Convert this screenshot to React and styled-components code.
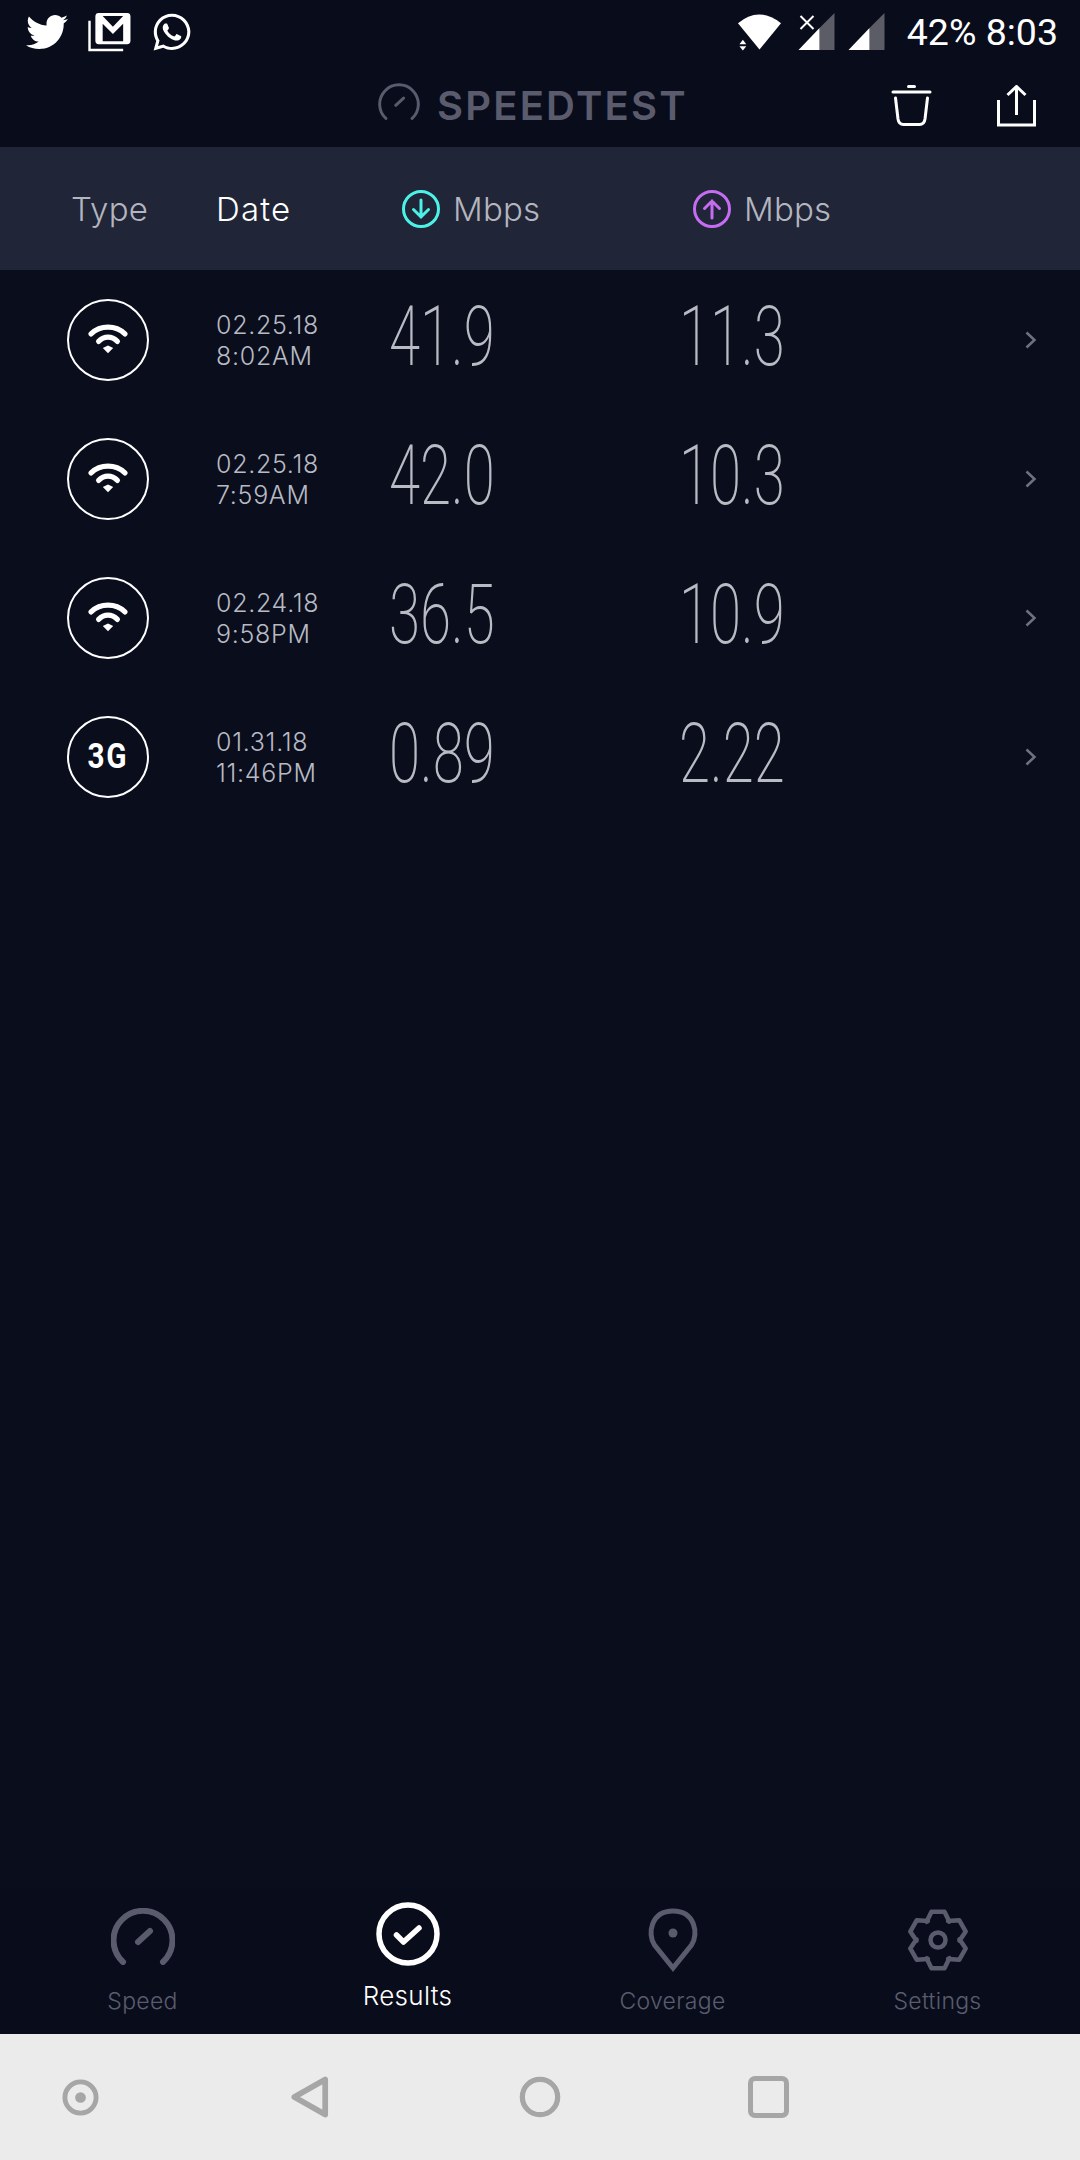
import styled, { createGlobalStyle } from "styled-components";
import { FaTwitter, FaWhatsapp } from "react-icons/fa";

const results = [
	{ type: "wifi", date: "02.25.18", time: "8:02AM", down: "41.9", up: "11.3" },
	{ type: "wifi", date: "02.25.18", time: "7:59AM", down: "42.0", up: "10.3" },
	{ type: "wifi", date: "02.24.18", time: "9:58PM", down: "36.5", up: "10.9" },
	{ type: "3G", date: "01.31.18", time: "11:46PM", down: "0.89", up: "2.22" },
];

// six toothed outline, one tooth straight up
const gearPath = () => {
	const pts = [];
	for (let i = 0; i < 6; i++) {
		const a = -90 + i * 60;
		[[-32, 21.5], [-13, 29], [13, 29], [32, 21.5]].forEach(([d, r]) => {
			const t = ((a + d) * Math.PI) / 180;
			pts.push(`${(32 + r * Math.cos(t)).toFixed(2)} ${(32 + r * Math.sin(t)).toFixed(2)}`);
		});
	}
	return `M${pts.join("L")}Z`;
};

const GaugeIcon = ({ size, color, width }) => (
	<svg width={size} height={size * 0.89} viewBox="0 0 64 57" fill="none" stroke={color} strokeWidth={width} strokeLinecap="round">
		<path d="M12 54A29.5 29.5 0 1 1 52 54" />
		<path d="M27 34L39 23" />
	</svg>
);

const WifiGlyph = () => (
	<svg width="40" height="32" viewBox="0 0 42 34" fill="none" stroke="#fff" strokeWidth="5.5" strokeLinecap="round">
		<path d="M3 10.5C13 1 29 1 39 10.5" />
		<path d="M11 18.5C17 12.5 25 12.5 31 18.5" />
		<path d="M15.5 25.5L21 22.8L26.5 25.5L21 31Z" fill="#fff" stroke="none" />
	</svg>
);

const App = () => {
	return (
		<Page>
			<GlobalStyle />
			<StatusBar>
				<StatusIcons>
					<FaTwitter size="42" color="#fff" />
					<svg width="45" height="39" viewBox="0 0 44 40" fill="none" stroke="#fff" strokeWidth="3">
						<path d="M1.5 8V38H36" strokeWidth="2.5" />
						<rect x="9" y="1.5" width="33" height="29" rx="2" />
						<path d="M9 3H15L25.5 14L36 3H42V30H36V11L25.5 21.5L15 11V30H9Z" fill="#fff" stroke="none" />
					</svg>
					<FaWhatsapp size="42" color="#fff" />
				</StatusIcons>
				<StatusRight>
					<WifiMark width="45" height="38" viewBox="0 0 46 38">
						<path d="M1 10Q22 -8 45 10L23 37Z" fill="#fff" />
						<path d="M6 27L9.5 31.5H2.5ZM2.5 33.5H9.5L6 38Z" fill="#fff" />
					</WifiMark>
					<svg width="37" height="38" viewBox="0 0 36 38">
						<path d="M21 15L36 0V37H21Z" fill="#5b5c66" />
						<path d="M0 37L21 15V37Z" fill="#fff" />
						<path d="M2 3L15 16M15 3L2 16" stroke="#fff" strokeWidth="2" />
					</svg>
					<SignalMark width="37" height="38" viewBox="0 0 36 38">
						<path d="M21 15L36 0V37H21Z" fill="#5b5c66" />
						<path d="M0 37L21 15V37Z" fill="#fff" />
					</SignalMark>
					<Clock>42% 8:03</Clock>
				</StatusRight>
			</StatusBar>
			<TitleBar>
				<Brand>
					<BrandGauge>
						<GaugeIcon size={42} color="#5a5c6e" width={4.5} />
					</BrandGauge>
					<BrandName>SPEEDTEST</BrandName>
				</Brand>
				<Actions>
					<svg width="41" height="42" viewBox="0 0 40 42" fill="none" stroke="#fff" strokeWidth="3" strokeLinecap="round">
						<path d="M1.5 7H38.5" />
						<path d="M17 1.5H23" />
						<path d="M4 13L6.5 34Q7.3 39.5 12 39.5H28Q32.7 39.5 33.5 34L36 13" />
					</svg>
					<svg width="41" height="42" viewBox="0 0 40 42" fill="none" stroke="#fff" strokeWidth="3">
						<path d="M2 15V40H38V15" />
						<path d="M20 30V2M11 10L20 1.5L29 10" />
					</svg>
				</Actions>
			</TitleBar>
			<TableHead>
				<HeadLabel>Type</HeadLabel>
				<HeadLabel $active>Date</HeadLabel>
				<SpeedHead>
					<svg width="40" height="40" viewBox="0 0 40 40" fill="none" stroke="#4cf2e6" strokeWidth="3" strokeLinecap="round">
						<circle cx="20" cy="20" r="17.5" />
						<path d="M20 11V28M12.5 20.5L20 28L27.5 20.5" />
					</svg>
					<HeadLabel>Mbps</HeadLabel>
				</SpeedHead>
				<SpeedHead>
					<svg width="40" height="40" viewBox="0 0 40 40" fill="none" stroke="#c56cf0" strokeWidth="3" strokeLinecap="round">
						<circle cx="20" cy="20" r="17.5" />
						<path d="M20 29V12M12.5 19.5L20 12L27.5 19.5" />
					</svg>
					<HeadLabel>Mbps</HeadLabel>
				</SpeedHead>
			</TableHead>
			<List>
				{results.map((r) => (
					<Row key={r.date + r.time}>
						<TypeBadge>{r.type === "wifi" ? <WifiGlyph /> : <NetworkText>3G</NetworkText>}</TypeBadge>
						<DateCell>
							<span>{r.date}</span>
							<span>{r.time}</span>
						</DateCell>
						<Speed>{r.down}</Speed>
						<Speed>{r.up}</Speed>
						<Chevron width="14" height="20" viewBox="0 0 14 20" fill="none" stroke="#6f7180" strokeWidth="2.5">
							<path d="M2.5 2.5L10.5 10L2.5 17.5" />
						</Chevron>
					</Row>
				))}
			</List>
			<TabBar>
				<Tab>
					<TabIcon>
						<GaugeIcon size={64} color="#5a5c6e" width={6} />
					</TabIcon>
					<TabLabel>Speed</TabLabel>
				</Tab>
				<Tab $active>
					<TabIcon $active>
						<svg width="64" height="64" viewBox="0 0 64 64" fill="none" stroke="#fff" strokeWidth="5.5" strokeLinecap="round" strokeLinejoin="round">
							<circle cx="32" cy="32" r="29" />
							<path d="M20.5 33L27.5 40L43 26" />
						</svg>
					</TabIcon>
					<TabLabel $active>Results</TabLabel>
				</Tab>
				<Tab>
					<TabIcon>
						<svg width="50" height="64" viewBox="0 0 50 64" fill="none" stroke="#5a5c6e" strokeWidth="5">
							<path d="M25 60L6.5 37C-1 26 3 3 25 3S51 26 43.5 37Z" strokeLinejoin="miter" />
							<circle cx="25" cy="25" r="4.5" fill="#5a5c6e" stroke="none" />
						</svg>
					</TabIcon>
					<TabLabel>Coverage</TabLabel>
				</Tab>
				<Tab>
					<TabIcon>
						<svg width="64" height="64" viewBox="0 0 64 64" fill="none" stroke="#5a5c6e" strokeWidth="4.5" strokeLinejoin="round">
							<path d={gearPath()} />
							<circle cx="32" cy="32" r="7.5" />
						</svg>
					</TabIcon>
					<TabLabel>Settings</TabLabel>
				</Tab>
			</TabBar>
			<NavBar>
				<NavSlot>
					<svg width="37" height="37" viewBox="0 0 38 38" fill="none" stroke="#a6a6a6" strokeWidth="5">
						<circle cx="19" cy="19" r="16" />
						<circle cx="19" cy="19" r="5.5" fill="#a6a6a6" stroke="none" />
					</svg>
				</NavSlot>
				<NavSlot $gap={192}>
					<svg width="38" height="42" viewBox="0 0 40 44" fill="none" stroke="#a6a6a6" strokeWidth="6" strokeLinejoin="round">
						<path d="M36 3.5V40.5L3.5 22Z" />
					</svg>
				</NavSlot>
				<NavSlot $gap={190}>
					<svg width="42" height="42" viewBox="0 0 44 44" fill="none" stroke="#a6a6a6" strokeWidth="5.5">
						<circle cx="22" cy="22" r="18.5" />
					</svg>
				</NavSlot>
				<NavSlot $gap={187}>
					<NavSquare />
				</NavSlot>
			</NavBar>
		</Page>
	);
};

export default App;

const GlobalStyle = createGlobalStyle`
	* {
		box-sizing: border-box;
	}
	body {
		margin: 0;
		background: #0a0d1c;
		font-family: "Inter", "Liberation Sans", sans-serif;
	}
`;
const Page = styled.div`
	display: flex;
	flex-direction: column;
	width: 1080px;
	height: 2160px;
	overflow: hidden;
	background: #0a0d1c;
`;
const StatusBar = styled.div`
	display: flex;
	justify-content: space-between;
	align-items: center;
	height: 64px;
	padding: 0 22px 0 26px;
	background: #090c1b;
`;
const StatusIcons = styled.div`
	display: flex;
	align-items: center;
	gap: 19px;
`;
const StatusRight = styled.div`
	display: flex;
	align-items: center;
	gap: 13px;
`;
const WifiMark = styled.svg`
	margin-right: 3px;
`;
const SignalMark = styled.svg`
	margin-right: 9px;
`;
const Clock = styled.div`
	font-family: "Roboto", sans-serif;
	font-size: 37.5px;
	color: #fff;
	white-space: nowrap;
`;
const TitleBar = styled.div`
	display: flex;
	justify-content: space-between;
	align-items: center;
	height: 83px;
	padding: 0 43px 0 378px;
	background: #090c1b;
`;
const Brand = styled.div`
	display: flex;
	align-items: center;
	gap: 17px;
`;
const BrandGauge = styled.div`
	display: flex;
	margin-bottom: 8px;
`;
const BrandName = styled.div`
	font-size: 40px;
	font-weight: 600;
	line-height: 44px;
	letter-spacing: 2.2px;
	color: #5a5c6e;
`;
const Actions = styled.div`
	display: flex;
	align-items: center;
	gap: 64px;
`;
const TableHead = styled.div`
	display: grid;
	grid-template-columns: 145px 185px 291px 1fr;
	align-items: center;
	height: 123px;
	padding-left: 71px;
	background: #202538;
`;
const HeadLabel = styled.div`
	font-size: 33px;
	font-weight: 300;
	letter-spacing: ${(p) => (p.$active ? "1.2px" : "0.2px")};
	color: ${(p) => (p.$active ? "#ffffff" : "#b3b5bf")};
`;
const SpeedHead = styled.div`
	display: flex;
	align-items: center;
	gap: 12px;
`;
const List = styled.div`
	flex: 1;
`;
const Row = styled.div`
	display: grid;
	grid-template-columns: 149px 173px 290px 1fr auto;
	align-items: center;
	height: 139px;
	padding: 0 42px 0 67px;
`;
const TypeBadge = styled.div`
	display: flex;
	align-items: center;
	justify-content: center;
	width: 82px;
	height: 82px;
	border: 2px solid #fff;
	border-radius: 50%;
`;
const NetworkText = styled.span`
	display: inline-block;
	font-family: "Roboto", sans-serif;
	font-size: 35px;
	font-weight: 700;
	letter-spacing: 2px;
	color: #fff;
	transform: scaleX(0.85);
`;
const DateCell = styled.div`
	display: flex;
	flex-direction: column;
	margin-top: 2px;
	font-size: 25px;
	font-weight: 300;
	line-height: 31px;
	letter-spacing: 0.7px;
	color: #b8bac3;
`;
const Speed = styled.div`
	margin-top: -5px;
	font-family: "Roboto", sans-serif;
	font-size: 83px;
	font-weight: 200;
	line-height: 90px;
	color: #b9bbc4;
	white-space: nowrap;
	transform: scaleX(0.68);
	transform-origin: left center;
`;
const Chevron = styled.svg`
	display: block;
`;
const TabBar = styled.div`
	display: grid;
	grid-template-columns: repeat(4, 1fr);
	height: 146px;
	padding: 0 10px;
	background: #090c1b;
`;
const Tab = styled.div`
	display: flex;
	flex-direction: column;
	align-items: center;
	padding-top: ${(p) => (p.$active ? "14px" : "20px")};
`;
const TabIcon = styled.div`
	display: flex;
	justify-content: center;
	height: ${(p) => (p.$active ? "66px" : "64px")};
`;
const TabLabel = styled.div`
	margin-top: ${(p) => (p.$active ? "11px" : "12px")};
	font-size: ${(p) => (p.$active ? "26px" : "23px")};
	font-weight: 300;
	line-height: 34px;
	letter-spacing: 0.3px;
	color: ${(p) => (p.$active ? "#ffffff" : "#5a5c6e")};
`;
const NavBar = styled.div`
	display: flex;
	align-items: center;
	height: 126px;
	padding-left: 62px;
	background: #ebebeb;
`;
const NavSlot = styled.div`
	display: flex;
	margin-left: ${(p) => p.$gap || 0}px;
`;
const NavSquare = styled.div`
	width: 41px;
	height: 42px;
	border: 5.5px solid #a6a6a6;
	border-radius: 7px;
`;
